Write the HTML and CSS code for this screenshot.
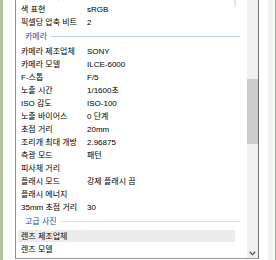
FILE: index.html
```html
<!DOCTYPE html>
<html lang="ko">
<head>
<meta charset="utf-8">
<link rel="stylesheet" href="styles.css">
</head>
<body>
<div class="frame-left"></div>
<div class="gap-left"></div>
<div class="list">
  <div class="content">
    <div class="sliver"></div>
    <div class="rows">
      <div class="row"><span class="k">해상도 단위</span><span class="v">2</span></div>
      <div class="row"><span class="k">색 표현</span><span class="v">sRGB</span></div>
      <div class="row"><span class="k">픽셀당 압축 비트</span><span class="v">2</span></div>
      <div class="group"><span class="gt">카메라</span><span class="gl"></span></div>
      <div class="row"><span class="k">카메라 제조업체</span><span class="v">SONY</span></div>
      <div class="row"><span class="k">카메라 모델</span><span class="v">ILCE-6000</span></div>
      <div class="row"><span class="k">F-스톱</span><span class="v">F/5</span></div>
      <div class="row"><span class="k">노출 시간</span><span class="v">1/1600초</span></div>
      <div class="row"><span class="k">ISO 감도</span><span class="v">ISO-100</span></div>
      <div class="row"><span class="k">노출 바이어스</span><span class="v">0 단계</span></div>
      <div class="row"><span class="k">초점 거리</span><span class="v">20mm</span></div>
      <div class="row"><span class="k">조리개 최대 개방</span><span class="v">2.96875</span></div>
      <div class="row"><span class="k">측광 모드</span><span class="v">패턴</span></div>
      <div class="row"><span class="k">피사체 거리</span><span class="v"></span></div>
      <div class="row"><span class="k">플래시 모드</span><span class="v">강제 플래시 끔</span></div>
      <div class="row"><span class="k">플래시 에너지</span><span class="v"></span></div>
      <div class="row"><span class="k">35mm 초점 거리</span><span class="v">30</span></div>
      <div class="group"><span class="gt">고급 사진</span><span class="gl light"></span></div>
      <div class="row hot"><span class="k">렌즈 제조업체</span><span class="v"></span></div>
      <div class="row"><span class="k">렌즈 모델</span><span class="v"></span></div>
    </div>
  </div>
  <div class="scrollbar">
    <div class="thumb"></div>
    <div class="track-fill"></div>
    <div class="arrow">
      <svg width="7" height="5" viewBox="0 0 7 5"><path d="M0.8 0.8 L3.5 3.6 L6.2 0.8" fill="none" stroke="#505050" stroke-width="1.3"/></svg>
    </div>
  </div>
</div>
<div class="frame-right">
  <div class="fr-white"></div>
  <div class="fr-grey"></div>
  <div class="fr-white2"></div>
  <div class="fr-green"></div>
</div>
</body>
</html>
```
FILE: styles.css
```css
html, body {
  margin: 0;
  padding: 0;
}
body {
  width: 276px;
  height: 260px;
  overflow: hidden;
  background: #ffffff;
  display: flex;
  align-items: flex-start;
  font-family: "Liberation Sans", "Noto Sans CJK KR", sans-serif;
  font-size: 8px;
  color: #000000;
}
.frame-left {
  width: 3px;
  height: 260px;
  background: #b3c2a0;
}
.gap-left {
  width: 12px;
  height: 260px;
  background: #ffffff;
}
.list {
  width: 242px;
  height: 258px;
  border-left: 1px solid #8e8e8e;
  border-right: 1px solid #6f6f6f;
  border-bottom: 1px solid #9a9a9a;
  display: flex;
}
.content {
  flex: 1;
  position: relative;
  overflow: hidden;
  padding: 0 7px 0 2px;
}
.sliver {
  position: absolute;
  left: 218px;
  top: 0;
  width: 2px;
  height: 7px;
  background: #e6e6e6;
}
.rows {
  margin-top: -10px;
  display: flex;
  flex-direction: column;
}
.row {
  height: 13px;
  line-height: 13px;
  margin-right: 5px;
  display: grid;
  grid-template-columns: 69px 1fr;
  white-space: nowrap;
}
.row .k {
  padding-left: 3px;
  overflow: hidden;
}
.row.hot {
  background: linear-gradient(#ececec, #ececec) no-repeat 0 0 / 100% 12px;
}
.group {
  height: 16px;
  display: flex;
  align-items: center;
  padding-left: 7px;
  padding-bottom: 1px;
  box-sizing: border-box;
}
.gt {
  color: #1f52ac;
  line-height: 13px;
  white-space: nowrap;
}
.gl {
  flex: 1;
  height: 1px;
  margin-left: 4px;
  background: #b9cbe6;
}
.gl.light {
  background: #d3e0f2;
}
.scrollbar {
  width: 11px;
  height: 258px;
  background: #f0f0f0;
  display: flex;
  flex-direction: column;
}
.thumb {
  margin-top: 79px;
  height: 65px;
  background: #cdcdcd;
}
.track-fill {
  flex: 1;
}
.arrow {
  height: 11px;
  display: flex;
  align-items: center;
  justify-content: center;
}
.arrow svg {
  display: block;
  margin-top: 1px;
}
.frame-right {
  display: flex;
  height: 260px;
}
.fr-white {
  width: 9px;
  background: #ffffff;
}
.fr-grey {
  width: 5px;
  background: #f0f0f0;
}
.fr-white2 {
  width: 2px;
  background: #fbfbfb;
}
.fr-green {
  width: 1px;
  background: #9cae88;
}
```
